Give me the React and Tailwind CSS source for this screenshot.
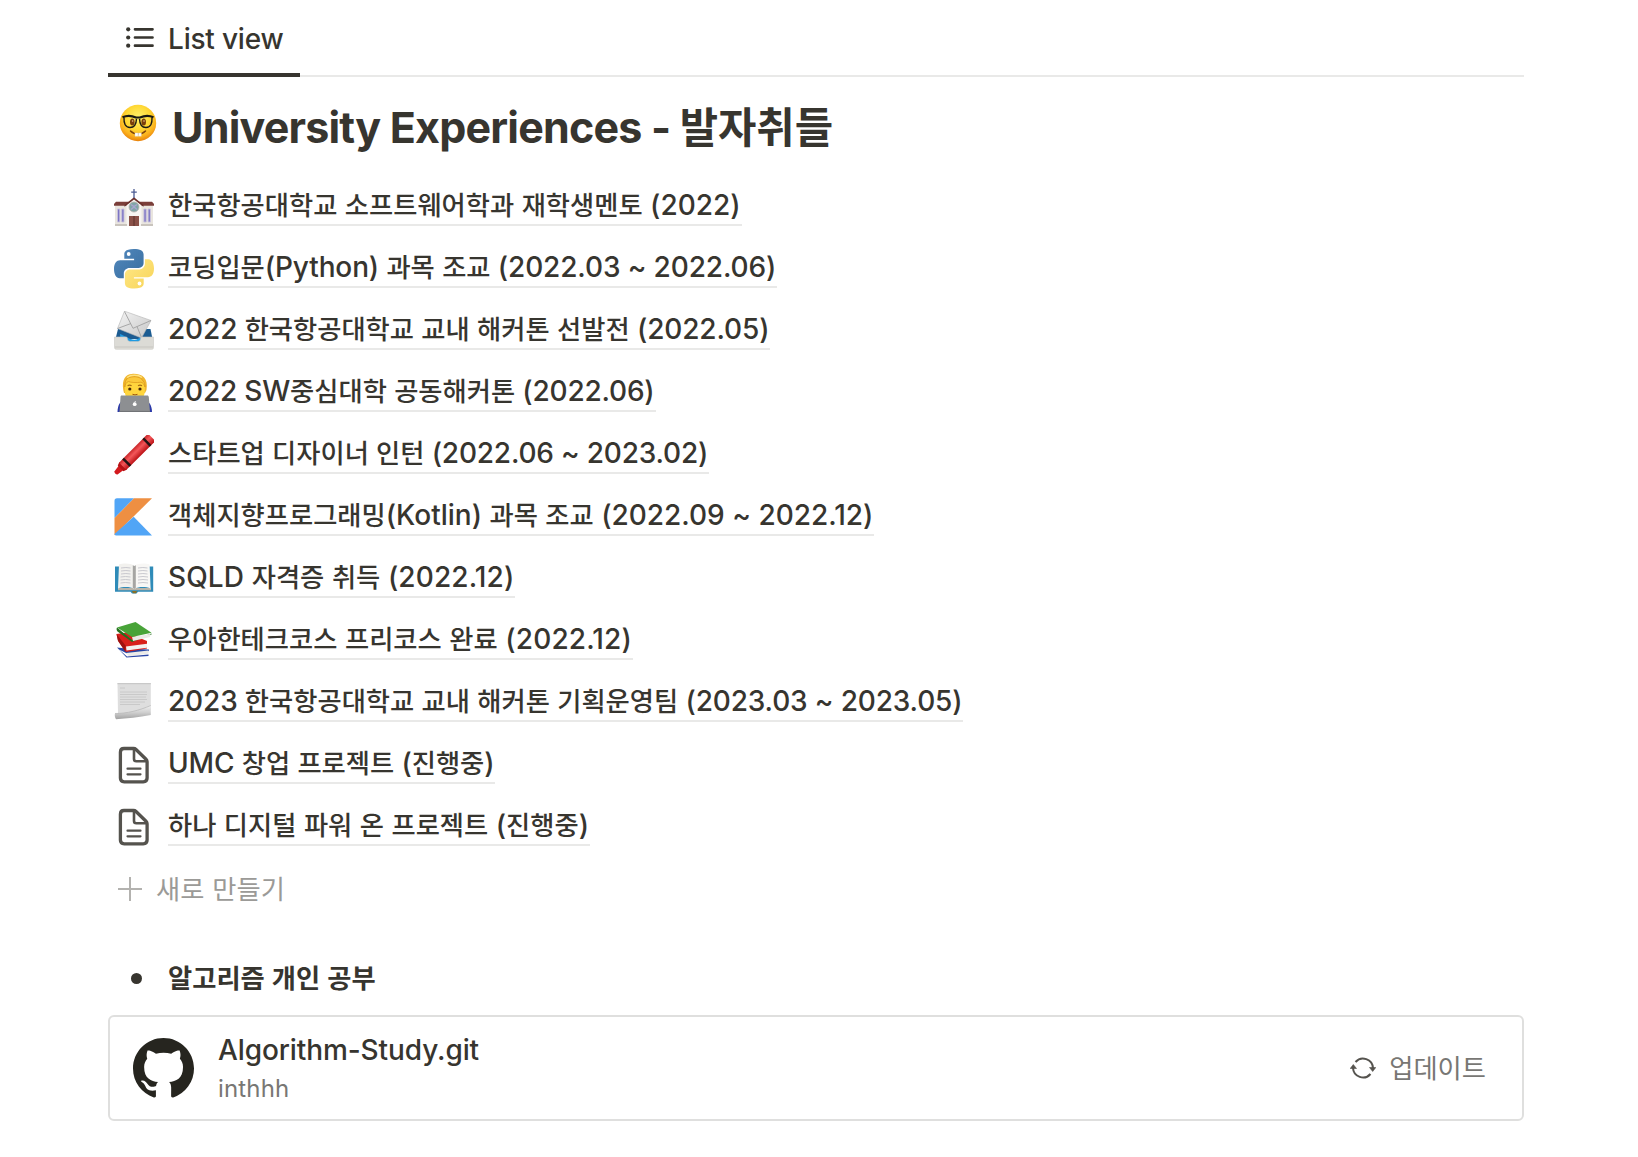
import React from "react";

const HANGUL = /([\u3131-\u318e\uac00-\ud7a3]+)/;

function Mixed({ text, ko }) {
  return text.split(HANGUL).map((part, i) =>
    HANGUL.test(part) ? (
      <span key={i} className={ko}>{part}</span>
    ) : (
      <React.Fragment key={i}>{part}</React.Fragment>
    )
  );
}

const KO_ROW = "font-['Noto_Sans_CJK_KR'] text-[26.3px] leading-[0] tracking-normal";

function Icon({ children }) {
  return (
    <svg viewBox="0 0 40 40" className="h-10 w-10 shrink-0">
      {children}
    </svg>
  );
}

function Nerd() {
  return (
    <svg viewBox="0 0 38 38" className="h-[38px] w-[38px] shrink-0">
      <defs>
        <radialGradient id="face" cx=".5" cy=".35" r=".65">
          <stop offset="0" stopColor="#fff26b" />
          <stop offset=".5" stopColor="#ffd935" />
          <stop offset=".8" stopColor="#fbb01d" />
          <stop offset="1" stopColor="#e8820c" />
        </radialGradient>
      </defs>
      <circle cx="19" cy="19" r="18.2" fill="url(#face)" />
      <ellipse cx="13.3" cy="18" rx="2.3" ry="3.6" fill="#7a3e0b" />
      <ellipse cx="24.7" cy="18" rx="2.3" ry="3.6" fill="#7a3e0b" />
      <circle cx="13.6" cy="17" r=".8" fill="#e8c08a" />
      <circle cx="25" cy="17" r=".8" fill="#e8c08a" />
      <path d="M3.5 13.2c4-1.8 9-1.8 13.5.3h4c4.500-2.100 9.500-2.100 13.500-.3" fill="none" stroke="#1b1a14" strokeWidth="2.200" />
      <path d="M5 13.500c-.3 6 1.300 10 6 10 4.500 0 6.300-3.500 6.500-8.800M33 13.500c.3 6-1.300 10-6 10-4.500 0-6.300-3.500-6.500-8.800" fill="none" stroke="#1b1a14" strokeWidth="1.400" />
      <path d="M11.500 27c4 4 11 4 15 0" fill="none" stroke="#7d430c" strokeWidth="1.500" strokeLinecap="round" />
      <path d="M16 29h3v3.200h-3zM19.300 29h3v3.200h-3z" fill="#fff" stroke="#d8d2c4" strokeWidth=".4" />
    </svg>
  );
}

function Church() {
  return (
    <Icon>
      <path d="M1 18h38v20H1z" fill="#e9e5df" />
      <path d="M0 17l2-2.300h36l2 2.300v1.800H0z" fill="#7b3f3a" />
      <path d="M12.500 39V18L20 12l7.500 6v21z" fill="#f7f5f2" />
      <path d="M20 10.300L10.500 18v1.700L20 12.500l9.500 7.200V18z" fill="#6b302c" />
      <path d="M20 2v9M17.200 5.200h5.600" stroke="#4b5b93" strokeWidth="1.300" />
      <circle cx="20" cy="20" r="5" fill="#7fa6a6" stroke="#b9b4af" strokeWidth=".8" />
      <path d="M17 17.500l3 2 3-2M17 22.500l3-2.500 3 2.500" stroke="#a8a5cf" strokeWidth="1.500" fill="none" />
      <path d="M15 29h10v10H15z" fill="#8a5148" />
      <path d="M20 29v10" stroke="#4e2824" strokeWidth=".8" />
      <path d="M1 37h12v2H1zM27 37h12v2H27z" fill="#c9c4bd" />
      <path d="M3.500 22h2.300v13H3.500zM7.700 22h2.300v13H7.700zM29.900 22h2.300v13h-2.300zM34.100 22h2.300v13h-2.300z" fill="#7d75c4" stroke="#c8c3dd" strokeWidth=".9" />
    </Icon>
  );
}

function Python() {
  return (
    <Icon>
      <defs>
        <linearGradient id="pyBlue" x1="0" y1="0" x2="1" y2="1">
          <stop offset="0" stopColor="#5289bd" />
          <stop offset="1" stopColor="#386d9f" />
        </linearGradient>
        <linearGradient id="pyYellow" x1="0" y1="0" x2="1" y2="1">
          <stop offset="0" stopColor="#ffe98a" />
          <stop offset="1" stopColor="#f7d355" />
        </linearGradient>
      </defs>
      <path d="M19.800 0c-9.500 0-9.500 4-9.500 5.500V9.800h9.800v1.400H6.100C2.500 11.200 0 14.500 0 20s2.300 9.200 5.500 9.200h4.300v-4.700c0-3.200 2.700-5.500 5.600-5.500h9.300c2.800 0 4.900-2.200 4.900-4.900V5.500C29.600 1.600 26 0 19.800 0z" fill="url(#pyBlue)" />
      <circle cx="14.700" cy="5" r="1.900" fill="#fff" />
      <path d="M20.200 39.400c9.500 0 9.500-4 9.500-5.500v-4.300h-9.800v-1.400h14C37.500 28.200 40 25 40 19.500s-2.300-9.200-5.500-9.200h-3.600v4.500c0 3.200-2.700 5.700-5.600 5.700H16c-2.800 0-5.100 2.200-5.100 4.900v8.500c0 3.900 3.100 5.500 9.300 5.500z" fill="url(#pyYellow)" />
      <circle cx="25.500" cy="34.500" r="1.900" fill="#fff" />
    </Icon>
  );
}

function Inbox() {
  return (
    <Icon>
      <defs>
        <linearGradient id="env" x1="0" y1="0" x2="1" y2="1">
          <stop offset="0" stopColor="#f4f4f4" />
          <stop offset="1" stopColor="#c6c6c6" />
        </linearGradient>
      </defs>
      <path d="M4 18h32.500l2 10H1.500z" fill="#1b5b91" />
      <path d="M6 23c8 3 14 10 22 2l3 8H7z" fill="#209be2" />
      <path d="M10.500.2L37 9.500 27.500 27 3.500 17.500z" fill="url(#env)" stroke="#b3b3b3" strokeWidth=".6" />
      <path d="M10.500.5l8.500 16.800L37 9.500M3.500 17.500L17 12.500M23 15.500l4.500 11" fill="none" stroke="#a0a0a0" strokeWidth=".9" />
      <path d="M.5 26h11.700c1 0 1 1 1.200 2 .3 1.800 1.500 2.500 3 2.500h7.200c1.500 0 2.700-.7 3-2.500.2-1 .3-2 1.300-2h11.600v10.300c0 1.500-.7 2-2 2h-35c-1.300 0-2-.5-2-2z" fill="#dcdbd6" stroke="#c9c8c2" strokeWidth=".6" />
      <path d="M1 36h38" stroke="#bebdb8" strokeWidth=".7" />
    </Icon>
  );
}

function Technologist() {
  return (
    <Icon>
      <path d="M3.500 39c0-7 3-12 9-13h16c6 1 9.500 6 9.500 13z" fill="#2b39a8" />
      <path d="M9.300 17C7.500 6 12 .8 18 .9 28 .3 34.500 5 32.500 17l-1.500 3H10z" fill="#f0b62f" />
      <path d="M10.800 13c0-2.500 1.500-4 3-5 5 1.500 11 1.700 14.500.5 1.500 1 2.500 2.500 2.500 4.500V18c0 7-5 10-10.300 10s-9.700-3-9.700-10z" fill="#ffd53d" />
      <path d="M10.800 14C10.500 8 13 5 15.500 4.500 20 3 27 3.500 29 8c1.500 1.500 2 3.500 2 6 -1-3-2.300-4.500-4-4.800C22 10 17 9.500 14.300 8.500 12 9.500 11.200 11.500 10.800 14z" fill="#fbc93c" stroke="#d8951b" strokeWidth=".7" />
      <path d="M13 4.500C17 1.500 24 1.500 28 4.500" stroke="#ffe380" strokeWidth="1.500" fill="none" />
      <circle cx="15.800" cy="16" r="1.600" fill="#4a2a0c" />
      <circle cx="26" cy="16" r="1.600" fill="#4a2a0c" />
      <path d="M13.600 12.800q2-1.300 4 0M24 12.800q2-1.300 4 0" stroke="#a86e15" strokeWidth="1.100" fill="none" />
      <path d="M18.500 21.300q2.500 1.200 5 0" stroke="#a0570d" strokeWidth="1" fill="none" />
      <path d="M7.800 22.500h25.400c1 0 1.500.7 1.600 1.500L36 39H5.500L6.500 24c0-.8.3-1.500 1.300-1.500z" fill="#8d8f92" />
      <path d="M5.500 37.900h30.500V39H5.500z" fill="#717376" />
      <circle cx="20.700" cy="31.200" r="1.900" fill="#fff" />
      <path d="M20.700 29.400l.8-1.300" stroke="#fff" strokeWidth=".9" />
    </Icon>
  );
}

function Crayon() {
  return (
    <Icon>
      <defs>
        <linearGradient id="wax" x1="0" y1="0" x2="0" y2="1">
          <stop offset="0" stopColor="#c92528" />
          <stop offset=".4" stopColor="#f4575a" />
          <stop offset="1" stopColor="#bb1115" />
        </linearGradient>
      </defs>
      <g transform="rotate(-45 20 20)">
        <path d="M-5.500 17.800c-1.200.8-1.200 3.600 0 4.400l7 1v-6.400z" fill="#d3191d" />
        <path d="M1 16l4-1.400v10.800L1 24z" fill="#b51115" />
        <rect x="4" y="14.800" width="41" height="10.400" rx="2" fill="url(#wax)" />
        <path d="M8.500 14.800h2.500v10.400H8.500zM37 14.800h2.500v10.400H37z" fill="#231414" />
      </g>
    </Icon>
  );
}

function Kotlin() {
  return (
    <Icon>
      <path d="M3 1.300h17L.5 21V4C.5 2.300 1.300 1.300 3 1.300z" fill="#51a5f6" />
      <path d="M20 1.300h18L.5 38.300V21z" fill="#ee8f42" />
      <path d="M19.700 19.700L38 38.500H3c-1.500 0-2.300-.5-2.500-1.500z" fill="#51a5f6" />
    </Icon>
  );
}

function OpenBook() {
  return (
    <Icon>
      <path d="M1 7.500h38.200v25.200H24l-1.500 1.800h-4.500L16.500 32.700H1z" fill="#2f8bb8" />
      <path d="M4 29h33v2.200H4z" fill="#b9b4a8" />
      <path d="M5 5.500C9.500 4 17 4 20.300 7v23C16 27.500 9 27.500 4 29.500z" fill="#f2f1ee" />
      <path d="M35.600 5.500C31.300 4 24 4 20.300 7v23c4.300-2.500 11.300-2.500 16.300-.5z" fill="#f8f7f5" />
      <path d="M18.800 6.300v22.500l1.500 1.200 1.500-1.200V6.300L20.300 7z" fill="#a6a5a3" />
      <path d="M7 9q5-1 9.500 0M7 12q5-1 9.500 0M7 15q5-1 9.500 0M6.500 18q5-1 10 0M6.500 21q5-1 10 0M6.500 24q5-1 10 0M24 9q5-1 9.500 0M24 12q5-1 9.500 0M24 15q5-1 9.500 0M24 18q5-1 10 0M24 21q5-1 10 0M24 24q5-1 10 0" stroke="#c3c3c9" strokeWidth=".9" fill="none" />
      <path d="M18 32h5l-1 2.200h-3z" fill="#8a6f26" />
    </Icon>
  );
}

function Books() {
  return (
    <Icon>
      <g transform="translate(0 -.5)">
        <path d="M3 27l9 1 23 1v1.500l-20 3.500L5 29z" fill="#2746a6" />
        <path d="M12 32.500L34.500 30v3L15 36z" fill="#ecebe8" />
        <path d="M4 28l9 8 21.500-2v1.500L12.500 37z" fill="#2c47a5" />
        <path d="M2.500 13.500l10-1.500L33 20.500v7.500l-21 3.500L4 20z" fill="#d8201b" />
        <path d="M12 26l21-2.800v4L12.500 30z" fill="#f3f2f0" />
        <path d="M2.500 13.500l9 11.500v6.500L4 20.500z" fill="#9f1110" />
        <path d="M3 7l15 12.500 19.500-6.500v1L18 21.500 3.500 11C2.500 10 2.300 8 3 7z" fill="#24701e" />
        <path d="M18 16.300l18.500-2.800-.5 3-17 4.100z" fill="#ebeae6" />
        <path d="M3 7L21.500 1.500 37.500 12.300 18 16.500z" fill="#48a338" />
      </g>
    </Icon>
  );
}

function PageCurl() {
  return (
    <Icon>
      <defs>
        <linearGradient id="curl" x1="0" y1="0" x2="0" y2="1">
          <stop offset="0" stopColor="#f0f0f0" />
          <stop offset=".5" stopColor="#d0d0d0" />
          <stop offset="1" stopColor="#a2a2a2" />
        </linearGradient>
      </defs>
      <g transform="translate(0 -1)">
        <path d="M3.500 1h33.300v27L4 32z" fill="#dedede" />
        <path d="M3.500 1h33.300v1.300H3.500z" fill="#c9c9c9" />
        <path d="M6 6h5M6 10h27M6 12.500h27M6 15h26M6 17.500h27M6 20h25M6 22.500h20" stroke="#c6c6c6" strokeWidth=".9" />
        <path d="M1 31.500c12 0 24-3 35.800-8v9.500C25 35 13 36.700 2 37.200.8 35.500.5 33 1 31.500z" fill="url(#curl)" />
        <path d="M1 31.500c12 0 24-3 35.800-8" fill="none" stroke="#b4b4b4" strokeWidth=".7" />
      </g>
    </Icon>
  );
}

function Page() {
  return (
    <Icon>
      <g fill="none" stroke="#55534e" strokeLinejoin="round" strokeLinecap="round">
        <path d="M10 3.500h9.500c1 0 1.800.3 2.500 1L32 14.200c.8.800 1.100 1.600 1.100 2.600V33c0 2.500-1.300 3.800-3.800 3.800H10.200c-2.500 0-3.800-1.300-3.800-3.800V7.300c0-2.500 1.300-3.800 3.600-3.800z" strokeWidth="3.300" />
        <path d="M20 4.500V14c0 1.700.7 2.300 2.300 2.300h10" strokeWidth="2.600" />
        <path d="M13.500 23.700h13M13.500 29.300h13" strokeWidth="2.200" />
      </g>
    </Icon>
  );
}

const rows = [
  { icon: Church, track: "tracking-normal", text: "한국항공대학교 소프트웨어학과 재학생멘토 (2022)" },
  { icon: Python, track: "tracking-[-0.13px]", text: "코딩입문(Python) 과목 조교 (2022.03 ~ 2022.06)" },
  { icon: Inbox, track: "tracking-[-0.13px]", text: "2022 한국항공대학교 교내 해커톤 선발전 (2022.05)" },
  { icon: Technologist, track: "tracking-[-0.2px]", text: "2022 SW중심대학 공동해커톤 (2022.06)" },
  { icon: Crayon, track: "tracking-[-0.2px]", text: "스타트업 디자이너 인턴 (2022.06 ~ 2023.02)" },
  { icon: Kotlin, track: "tracking-normal", text: "객체지향프로그래밍(Kotlin) 과목 조교 (2022.09 ~ 2022.12)" },
  { icon: OpenBook, track: "tracking-[0.12px]", text: "SQLD 자격증 취득 (2022.12)" },
  { icon: Books, track: "tracking-[0.13px]", text: "우아한테크코스 프리코스 완료 (2022.12)" },
  { icon: PageCurl, track: "tracking-[-0.15px]", text: "2023 한국항공대학교 교내 해커톤 기획운영팀 (2023.03 ~ 2023.05)" },
  { icon: Page, track: "tracking-[-0.15px]", text: "UMC 창업 프로젝트 (진행중)" },
  { icon: Page, track: "tracking-normal", text: "하나 디지털 파워 온 프로젝트 (진행중)" },
];

export default function App() {
  return (
    <div className="min-h-[1157px] bg-white pr-[114px] pl-[108px] font-[Inter,'Noto_Sans_CJK_KR',sans-serif] text-[28px] text-[#37352f]">
      <div className="flex h-[77px] border-b-2 border-[#e9e9e8]">
        <div className="flex h-[77px] w-[192px] shrink-0 items-start border-b-4 border-[#37352f] pl-[18px]">
          <svg viewBox="0 0 28 22" className="mt-[27px] h-[22px] w-7 shrink-0" stroke="#37352f" strokeLinecap="round" fill="#37352f">
            <path d="M9 2.300h17.500M9 10.500h17.500M9 18.700h17.500" strokeWidth="2.700" />
            <g stroke="none">
              <circle cx="2.200" cy="2.300" r="2.100" />
              <circle cx="2.200" cy="10.500" r="2.100" />
              <circle cx="2.200" cy="18.700" r="2.100" />
            </g>
          </svg>
          <span className="mt-[21px] ml-[14px] leading-[36px] font-medium tracking-[-0.2px] whitespace-nowrap">List view</span>
        </div>
      </div>

      <h2 className="flex h-[99px] items-start pt-[27px] pl-[11px] text-[43px] font-bold">
        <Nerd />
        <span className="ml-[15px] leading-[46px] tracking-[-0.8px] whitespace-nowrap">
          <Mixed text="University Experiences - 발자취들" ko="font-['Noto_Sans_CJK_KR'] text-[41.7px] leading-[0] tracking-normal" />
        </span>
      </h2>

      <ul>
        {rows.map(({ icon: RowIcon, text, track }) => (
          <li key={text} className="flex h-[62px] items-center gap-[14px] pl-[6px]">
            <RowIcon />
            <span className={`h-[38px] border-b-2 border-[#e9e9e8] pr-px leading-[34px] font-medium whitespace-nowrap ${track}`}>
              <Mixed text={text} ko={KO_ROW} />
            </span>
          </li>
        ))}
      </ul>

      <div className="flex h-[62px] items-center pl-[10px] text-[#9b9a97]">
        <svg viewBox="0 0 24 24" className="h-6 w-6" stroke="#b3b2af" strokeWidth="2">
          <path d="M12 0v24M0 12h24" />
        </svg>
        <span className="ml-[14px] leading-[34px] whitespace-nowrap">
          <Mixed text="새로 만들기" ko={KO_ROW} />
        </span>
      </div>

      <div className="mt-[27px] flex h-[62px] items-center pl-[23px] font-semibold">
        <span className="h-[11px] w-[11px] rounded-full bg-[#37352f]" />
        <span className="ml-[26px] leading-[34px] whitespace-nowrap">
          <Mixed text="알고리즘 개인 공부" ko={KO_ROW} />
        </span>
      </div>

      <div className="mt-[6px] flex h-[106px] items-center rounded-md border-2 border-[#dfdfde] pr-[36px] pl-[23px]">
        <svg viewBox="0 0 16 16" className="h-[61px] w-[61px] shrink-0" fill="#26251f">
          <path d="M8 0C3.580 0 0 3.580 0 8c0 3.540 2.290 6.530 5.470 7.590.4.070.550-.170.550-.380 0-.190-.010-.820-.010-1.490-2.010.370-2.530-.490-2.690-.940-.090-.230-.480-.940-.820-1.130-.280-.150-.680-.520-.010-.530.630-.010 1.080.580 1.230.820.720 1.210 1.870.870 2.330.660.070-.520.280-.870.510-1.070-1.780-.2-3.640-.890-3.640-3.950 0-.870.310-1.590.820-2.150-.080-.2-.360-1.020.080-2.120 0 0 .670-.210 2.200.820.640-.180 1.320-.270 2-.270s1.360.090 2 .270c1.530-1.040 2.200-.820 2.200-.820.440 1.100.160 1.920.080 2.120.510.560.820 1.270.820 2.150 0 3.070-1.870 3.750-3.650 3.950.290.250.540.730.540 1.480 0 1.070-.010 1.930-.010 2.200 0 .210.150.460.550.380A8.010 8.010 0 0 0 16 8c0-4.420-3.580-8-8-8z" />
        </svg>
        <div className="ml-[24px] flex flex-1 flex-col pt-[4px]">
          <span className="leading-[38px] font-medium tracking-[-0.1px]">Algorithm-Study.git</span>
          <span className="text-[24px] leading-[40px] tracking-[0.15px] text-[#787774]">inthhh</span>
        </div>
        <svg viewBox="0 0 26 24" className="mr-[13px] h-6 w-[26px]" fill="none" stroke="#55534e" strokeWidth="2">
          <path d="M5.500 6A10 10 0 0 1 23 12M20.500 18A10 10 0 0 1 3 12" />
          <path d="M19.500 11.500h6.300L22.700 15.500zM.2 12.500h6.300L3.300 8.500z" fill="#55534e" strokeWidth=".6" />
        </svg>
        <span className="leading-[34px] whitespace-nowrap text-[#787774]">
          <Mixed text="업데이트" ko={KO_ROW} />
        </span>
      </div>
    </div>
  );
}
